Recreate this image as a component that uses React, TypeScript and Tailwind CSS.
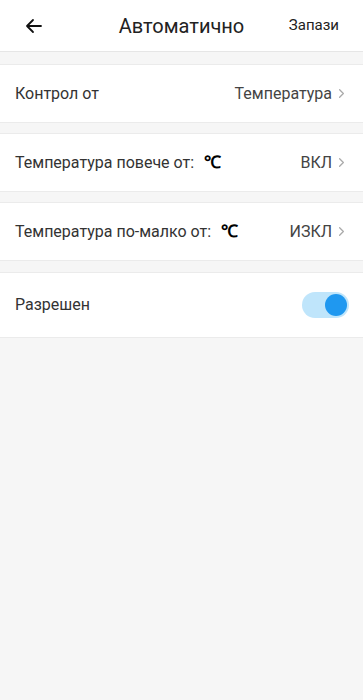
import { ChevronRight } from "lucide-react";

function Row({ label, unit, value }: { label: string; unit?: boolean; value: string }) {
  return (
    <div className="flex h-[59px] items-center justify-between border-y border-[#ebebeb] bg-white pl-[15px] pr-[14px]">
      <div className="flex items-center text-[16px] text-[#333]">
        <span>{label}</span>
        <span className={unit ? "ml-[10px] text-[17px] font-bold text-black" : "hidden"}>℃</span>
      </div>
      <div className="flex items-center text-[16px] text-[#444]">
        <span>{value}</span>
        <ChevronRight className="ml-[2px] h-[15px] w-[15px] text-[#aaa]" strokeWidth={2} />
      </div>
    </div>
  );
}

export default function App() {
  return (
    <div className="min-h-[700px] bg-[#f6f6f6] font-['Roboto',sans-serif]">
      <div className="grid h-[52px] grid-cols-[1fr_auto_1fr] items-center border-b border-[#e6e6e6] bg-white pl-[24px] pr-[24px]">
        <svg width="20" height="20" viewBox="0 0 20 20" fill="none" stroke="#111" strokeWidth="1.8" strokeLinecap="round" strokeLinejoin="round">
          <path d="M17 10H3M9 4l-6 6 6 6" />
        </svg>
        <span className="text-[20px] text-[#222]">Автоматично</span>
        <span className="justify-self-end text-[15px] text-[#222]">Запази</span>
      </div>
      <div className="mt-[12px] flex flex-col gap-[10px]">
        <Row label="Контрол от" value="Температура" />
        <Row label="Температура повече от:" unit value="ВКЛ" />
        <Row label="Температура по-малко от:" unit value="ИЗКЛ" />
        <div className="mt-[1px] flex h-[66px] items-center justify-between border-y border-[#ebebeb] bg-white pl-[15px] pr-[14px]">
          <span className="text-[16px] text-[#333]">Разрешен</span>
          <div className="flex h-[26px] w-[47px] items-center justify-end rounded-full bg-[#bfe5fb] pr-[2px]">
            <div className="h-[22px] w-[22px] rounded-full bg-[#1f98f0]" />
          </div>
        </div>
      </div>
    </div>
  );
}
